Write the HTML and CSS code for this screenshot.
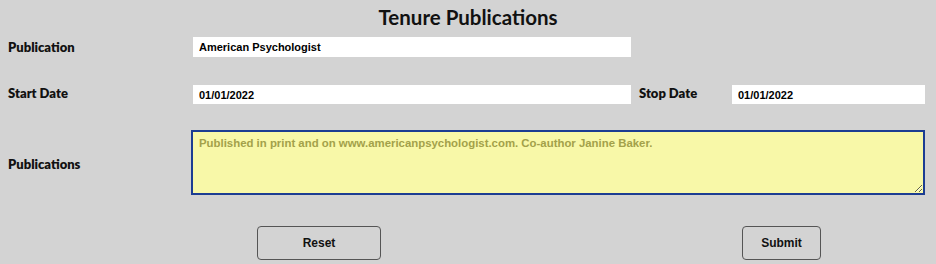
FILE: index.html
```html
<html>
<head>
<link rel="stylesheet" href="styles.css">
</head>
<body>
<div class="page">
<h1 class="title">Tenure Publications</h1>
<form class="pubform">
<div class="row row-pub">
<label class="lbl" for="pub">Publication</label>
<input class="field field-pub" id="pub" type="text" value="American Psychologist">
</div>
<div class="row row-dates">
<label class="lbl" for="start">Start Date</label>
<input class="field field-start" id="start" type="text" value="01/01/2022">
<label class="lbl lbl-stop" for="stop">Stop Date</label>
<input class="field field-stop" id="stop" type="text" value="01/01/2022">
</div>
<div class="row row-notes">
<label class="lbl" for="notes">Publications</label>
<textarea class="notes" id="notes">Published in print and on www.americanpsychologist.com. Co-author Janine Baker.</textarea>
</div>
<div class="actions">
<button type="reset" class="btn btn-reset">Reset</button>
<button type="submit" class="btn btn-submit">Submit</button>
</div>
</form>
</div>
</body>
</html>
```

FILE: styles.css
```css
body {
margin: 0;
background-color: #d3d3d3;
}

.page {
width: 936px;
height: 264px;
overflow: hidden;
}

.title {
margin: 0;
padding-top: 6px;
text-align: center;
font-family: "Lato", "Liberation Sans", sans-serif;
font-weight: 700;
font-size: 20.5px;
line-height: 23px;
color: #111;
}

.pubform {
padding: 0 0 0 8px;
margin: 0;
}

.row {
display: flex;
align-items: center;
}

.lbl {
width: 185px;
flex: none;
font-family: "Lato", "Liberation Sans", sans-serif;
font-weight: 800;
font-size: 13px;
color: #111;
}

.field {
box-sizing: border-box;
height: 20px;
border: none;
background-color: white;
padding: 0 6px;
font-family: "Liberation Sans", Arial, sans-serif;
font-weight: bold;
font-size: 11px;
color: #000;
outline: none;
}

.row-pub {
margin-top: 8px;
}

.field-pub {
width: 438px;
}

.row-dates {
margin-top: 28px;
}

.row-dates .lbl {
margin-top: -4px;
}

.field-start {
width: 438px;
height: 19px;
}

.lbl-stop {
width: 93px;
margin-left: 8px;
}

.field-stop {
width: 193px;
height: 19px;
}

.row-notes {
margin-top: 26px;
}

.row-notes .lbl {
width: 183px;
margin-top: 2px;
}

.notes {
box-sizing: border-box;
width: 734px;
height: 65px;
margin: 0;
padding: 5px 6px;
border: 2px solid #1c3d92;
background-color: #f8f8a8;
font-family: "Liberation Sans", Arial, sans-serif;
font-weight: bold;
font-size: 11.4px;
color: #a3a14a;
outline: none;
}

.actions {
display: flex;
margin-top: 31px;
}

.btn {
box-sizing: border-box;
height: 34px;
border: 1px solid #555;
border-radius: 4px;
background-color: #d3d3d3;
font-family: "Liberation Sans", Arial, sans-serif;
font-weight: bold;
font-size: 12px;
color: #111;
cursor: pointer;
}

.btn-reset {
width: 124px;
margin-left: 249px;
}

.btn-submit {
width: 79px;
margin-left: 361px;
}
```
